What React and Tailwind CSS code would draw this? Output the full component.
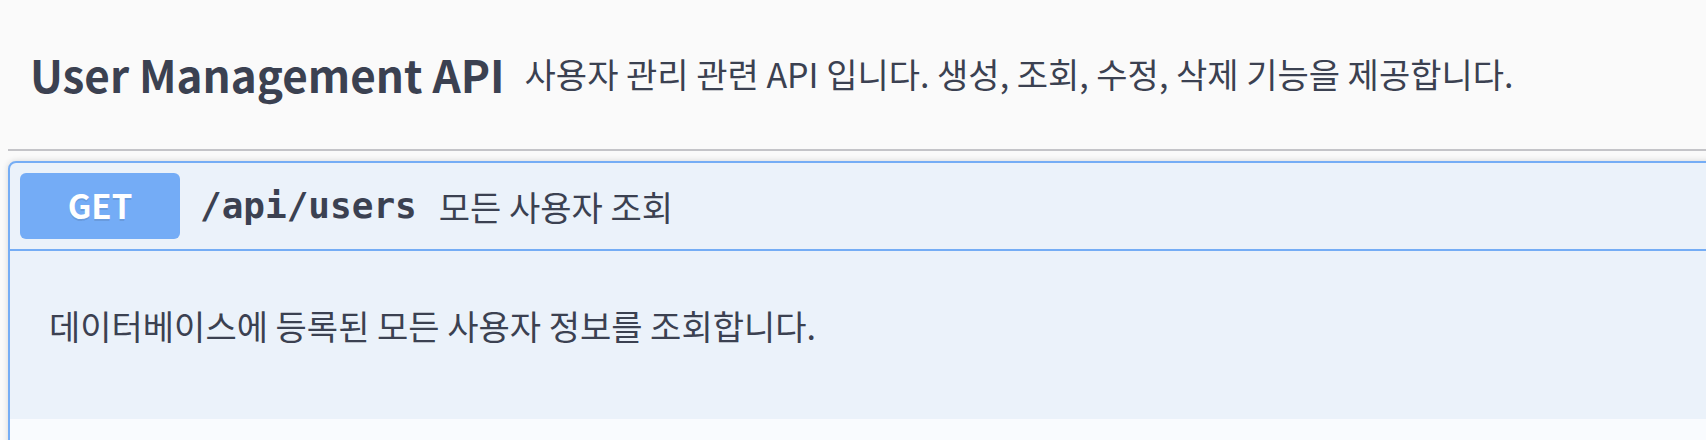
const sans = { fontFamily: '"Noto Sans CJK KR", "Noto Sans", sans-serif' };

export default function App() {
  return (
    <div className="w-[1706px] h-[440px] overflow-hidden bg-[#fafafa] text-[#3b4151]" style={sans}>
      {/* tag header */}
      <div className="flex items-center h-[149px] pl-[30px] pb-[2px]">
        <h3 className="text-[44px] font-bold leading-none">User Management API</h3>
        <small className="ml-[20px] text-[34px] leading-none">
          사용자 관리 관련 API 입니다. 생성, 조회, 수정, 삭제 기능을 제공합니다.
        </small>
      </div>
      <div className="ml-[8px] w-[1720px] h-[2px] bg-[#c4c4c8]" />

      {/* operation block */}
      <div className="mt-[10px] ml-[8px] w-[1740px] rounded-[8px] border-2 border-[#75adf5] bg-[#ebf2fa] shadow-[0_0_6px_rgba(0,0,0,0.15)] overflow-hidden">
        <div className="flex items-center p-[10px] border-b-2 border-[#75adf5]">
          <span className="w-[160px] h-[66px] flex items-center justify-center rounded-[6px] bg-[#74acf6] text-white text-[33px] font-bold [text-shadow:0_2px_0_rgba(0,0,0,0.1)]">
            GET
          </span>
          <span
            className="pl-[20px] pr-[22px] text-[36px] font-bold"
            style={{ fontFamily: '"DejaVu Sans Mono", "Liberation Mono", monospace' }}
          >
            /api/users
          </span>
          <span className="text-[34px]">모든 사용자 조회</span>
        </div>
        <div className="h-[168px] flex items-center pl-[39px] pb-[20px]">
          <p className="text-[34px]">데이터베이스에 등록된 모든 사용자 정보를 조회합니다.</p>
        </div>
        <div className="h-[40px] bg-[#f9fbfe]" />
      </div>
    </div>
  );
}
